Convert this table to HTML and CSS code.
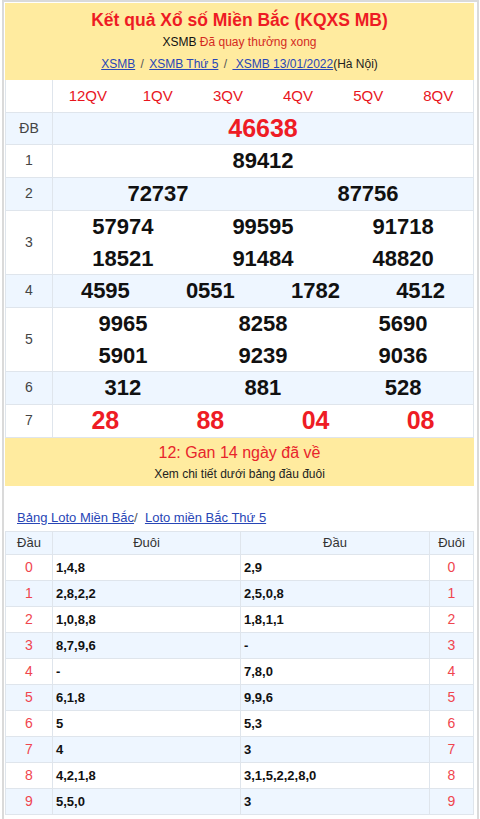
FILE: index.html
```html
<!DOCTYPE html>
<html lang="vi">
<head>
<meta charset="utf-8">
<title>KQXS MB</title>
<link rel="stylesheet" href="styles.css">
</head>
<body>
<div class="page">
  <div class="head">
    <h1 class="title">Kết quả Xổ số Miền Bắc (KQXS MB)</h1>
    <div class="sub">XSMB <span class="done">Đã quay thưởng xong</span></div>
    <div class="crumbs"><a href="#">XSMB</a> <span class="sep">/</span> <a href="#">XSMB Thứ 5</a> <span class="sep">/</span> <a href="#">&nbsp;XSMB 13/01/2022</a>(Hà Nội)</div>
  </div>

  <table class="kq">
    <colgroup>
      <col class="c-lbl">
      <col><col><col><col><col><col><col><col><col><col><col><col>
    </colgroup>
    <tr class="qv">
      <td class="lbl"></td>
      <td colspan="2">12QV</td><td colspan="2">1QV</td><td colspan="2">3QV</td>
      <td colspan="2">4QV</td><td colspan="2">5QV</td><td colspan="2">8QV</td>
    </tr>
    <tr class="alt">
      <td class="lbl">ĐB</td>
      <td colspan="12" class="num db">46638</td>
    </tr>
    <tr>
      <td class="lbl">1</td>
      <td colspan="12" class="num">89412</td>
    </tr>
    <tr class="alt">
      <td class="lbl">2</td>
      <td colspan="6" class="num">72737</td><td colspan="6" class="num">87756</td>
    </tr>
    <tr>
      <td class="lbl">3</td>
      <td colspan="4" class="num">57974<br>18521</td>
      <td colspan="4" class="num">99595<br>91484</td>
      <td colspan="4" class="num">91718<br>48820</td>
    </tr>
    <tr class="alt">
      <td class="lbl">4</td>
      <td colspan="3" class="num">4595</td><td colspan="3" class="num">0551</td>
      <td colspan="3" class="num">1782</td><td colspan="3" class="num">4512</td>
    </tr>
    <tr>
      <td class="lbl">5</td>
      <td colspan="4" class="num">9965<br>5901</td>
      <td colspan="4" class="num">8258<br>9239</td>
      <td colspan="4" class="num">5690<br>9036</td>
    </tr>
    <tr class="alt">
      <td class="lbl">6</td>
      <td colspan="4" class="num">312</td><td colspan="4" class="num">881</td><td colspan="4" class="num">528</td>
    </tr>
    <tr>
      <td class="lbl">7</td>
      <td colspan="3" class="num red">28</td><td colspan="3" class="num red">88</td>
      <td colspan="3" class="num red">04</td><td colspan="3" class="num red">08</td>
    </tr>
  </table>

  <div class="gan">
    <div class="gan-main">12: Gan 14 ngày đã về</div>
    <div class="gan-sub">Xem chi tiết dưới bảng đầu đuôi</div>
  </div>

  <div class="loto-links"><a href="#">Bảng Loto Miền Bắc</a>/ &nbsp;<a href="#">Loto miền Bắc Thứ 5</a></div>

  <table class="loto">
    <colgroup>
      <col class="l1"><col class="l2"><col class="l3"><col>
    </colgroup>
    <tr class="lh"><th>Đầu</th><th>Đuôi</th><th>Đầu</th><th>Đuôi</th></tr>
    <tr><td class="k">0</td><td class="v">1,4,8</td><td class="v">2,9</td><td class="k">0</td></tr>
    <tr class="alt"><td class="k">1</td><td class="v">2,8,2,2</td><td class="v">2,5,0,8</td><td class="k">1</td></tr>
    <tr><td class="k">2</td><td class="v">1,0,8,8</td><td class="v">1,8,1,1</td><td class="k">2</td></tr>
    <tr class="alt"><td class="k">3</td><td class="v">8,7,9,6</td><td class="v">-</td><td class="k">3</td></tr>
    <tr><td class="k">4</td><td class="v">-</td><td class="v">7,8,0</td><td class="k">4</td></tr>
    <tr class="alt"><td class="k">5</td><td class="v">6,1,8</td><td class="v">9,9,6</td><td class="k">5</td></tr>
    <tr><td class="k">6</td><td class="v">5</td><td class="v">5,3</td><td class="k">6</td></tr>
    <tr class="alt"><td class="k">7</td><td class="v">4</td><td class="v">3</td><td class="k">7</td></tr>
    <tr><td class="k">8</td><td class="v">4,2,1,8</td><td class="v">3,1,5,2,2,8,0</td><td class="k">8</td></tr>
    <tr class="alt"><td class="k">9</td><td class="v">5,5,0</td><td class="v">3</td><td class="k">9</td></tr>
  </table>
  <div class="tail"></div>
</div>
</body>
</html>
```

FILE: styles.css
```css
* { box-sizing: border-box; }

html, body {
  margin: 0;
  padding: 0;
  background: #fff;
  font-family: "Liberation Sans", Arial, sans-serif;
  color: #222;
}

.page {
  margin: 0 1px 0 2px;
  border: 2px solid #dadada;
  border-bottom: none;
  padding: 1px 3px 0 1px;
  min-height: 819px;
}

/* header */
.head {
  background: #ffeb9f;
  text-align: center;
  padding: 5px 0 7px;
}
.title {
  margin: 0;
  font-size: 17.5px;
  line-height: 24px;
  font-weight: bold;
  color: #ee1b24;
}
.sub {
  font-size: 12px;
  line-height: 20px;
  color: #111;
}
.done { color: #d42a1e; }
.crumbs {
  margin-top: 3px;
  font-size: 12px;
  line-height: 18px;
  color: #222;
}
.crumbs a, .loto-links a {
  color: #2846b6;
  text-decoration: underline;
}
.sep { color: #555; margin: 0 2px; }

/* result table */
.kq {
  width: 100%;
  border-collapse: collapse;
  table-layout: fixed;
  border-left: 1px solid #dfe5ec;
  border-right: 1px solid #dfe5ec;
}
.kq .c-lbl { width: 47px; }
.kq tr { border-bottom: 1px solid #dfe5ec; }
.kq tr.alt { background: #eef6ff; }
.kq td {
  padding: 0;
  text-align: center;
  line-height: 31.7px;
}
.kq td.lbl {
  border-right: 1px solid #dfe5ec;
  font-size: 14px;
  color: #444;
}
.kq tr.qv td {
  font-size: 15px;
  color: #e8151d;
}
.kq td.num {
  font-size: 22px;
  font-weight: bold;
  color: #111;
}
.kq td.db, .kq td.red {
  font-size: 25px;
  color: #ee1c25;
}

/* gan band */
.gan {
  background: #ffeb9f;
  text-align: center;
  padding: 4px 0 2px;
}
.gan-main {
  font-size: 16px;
  line-height: 22px;
  color: #e8242b;
}
.gan-sub {
  font-size: 12px;
  line-height: 20px;
  color: #222;
}

/* loto */
.loto-links {
  margin: 23px 0 4px;
  padding-left: 12px;
  font-size: 13px;
  line-height: 18px;
  color: #555;
}

.loto {
  width: 100%;
  border-collapse: collapse;
  table-layout: fixed;
  font-size: 13px;
}
.loto .l1 { width: 47px; }
.loto .l2 { width: 188px; }
.loto .l3 { width: 189px; }
.loto th, .loto td {
  border: 1px solid #dfe5ec;
  padding: 0 3px;
}
.loto th {
  background: #eef6ff;
  font-weight: normal;
  height: 23px;
  line-height: 22px;
  color: #333;
  text-align: center;
}
.loto td { height: 26px; line-height: 25px; }
.loto tr.alt td { background: #eef6ff; }
.loto td.k {
  text-align: center;
  color: #f0454e;
  font-size: 14px;
}
.loto td.v {
  font-weight: bold;
  color: #111;
}
.tail { height: 10px; }
```
